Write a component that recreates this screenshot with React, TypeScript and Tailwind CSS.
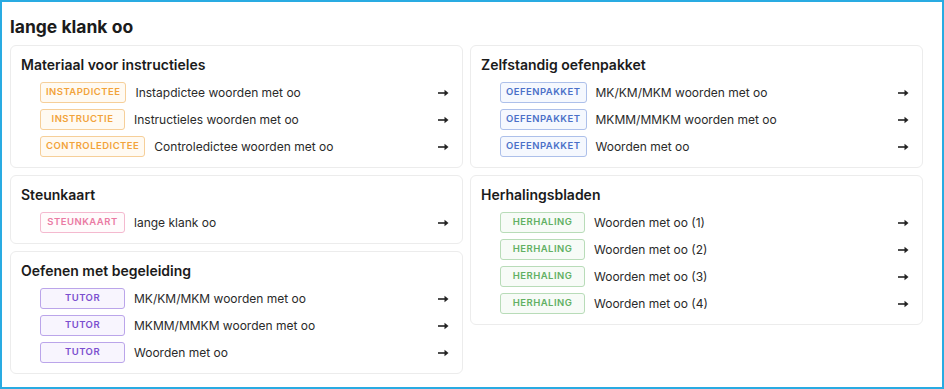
import React from "react";

type Kind = "orange" | "pink" | "purple" | "blue" | "green";

const badgeCls: Record<Kind, string> = {
  orange: "text-[#f2a33a] border-[#f6cf99] bg-[#fffaf2]",
  pink: "text-[#ea7aa3] border-[#f4b9cf] bg-[#fffbfc]",
  purple: "text-[#7b4fcf] border-[#bba5ea] bg-[#f8f5fe]",
  blue: "text-[#4b70c8] border-[#adc0ea] bg-[#f5f8fe]",
  green: "text-[#62b063] border-[#b8dcb8] bg-[#f7fbf7]",
};

type Row = { badge: string; kind: Kind; text: string };

function Arrow() {
  return (
    <svg width="11" height="8" viewBox="0 0 11 8" className="text-[#222]">
      <path d="M0 4 H8" stroke="currentColor" strokeWidth="1.6" />
      <path d="M6.5 0.8 L10.5 4 L6.5 7.2 Z" fill="currentColor" />
    </svg>
  );
}

function Card({ title, rows }: { title: string; rows: Row[] }) {
  return (
    <div className="rounded-md border border-[#ececec] bg-white pl-[10px] pr-[13px] pt-[9px] pb-[10px]">
      <div className="text-[14px] font-semibold leading-[20px] text-[#1b1b1b]">{title}</div>
      <div className="mt-[7px] flex flex-col gap-[6px] pl-[19px]">
        {rows.map((r, i) => (
          <div key={i} className="flex items-center">
            <span
              className={
                "inline-flex h-[21px] min-w-[85px] items-center justify-center rounded-[3px] border px-[5px] text-[9.5px] font-semibold uppercase tracking-[0.05em] " +
                badgeCls[r.kind]
              }
            >
              {r.badge}
            </span>
            <span className="ml-[9px] flex-1 text-[12px] text-[#2a2a2a]">{r.text}</span>
            <Arrow />
          </div>
        ))}
      </div>
    </div>
  );
}

export default function App() {
  return (
    <div
      className="h-[389px] w-[944px] border-2 border-[#29abe2] bg-white pl-[8px] pr-[19px]"
      style={{ fontFamily: "Inter, 'Open Sans', sans-serif" }}
    >
      <h1 className="mt-[14px] text-[17.5px] font-bold leading-[22px] text-[#1b1b1b]">lange klank oo</h1>
      <div className="mt-[7px] grid grid-cols-2 items-start gap-[7px]">
        <div className="flex flex-col gap-[7px]">
          <Card
            title="Materiaal voor instructieles"
            rows={[
              { badge: "Instapdictee", kind: "orange", text: "Instapdictee woorden met oo" },
              { badge: "Instructie", kind: "orange", text: "Instructieles woorden met oo" },
              { badge: "Controledictee", kind: "orange", text: "Controledictee woorden met oo" },
            ]}
          />
          <Card title="Steunkaart" rows={[{ badge: "Steunkaart", kind: "pink", text: "lange klank oo" }]} />
          <Card
            title="Oefenen met begeleiding"
            rows={[
              { badge: "Tutor", kind: "purple", text: "MK/KM/MKM woorden met oo" },
              { badge: "Tutor", kind: "purple", text: "MKMM/MMKM woorden met oo" },
              { badge: "Tutor", kind: "purple", text: "Woorden met oo" },
            ]}
          />
        </div>
        <div className="flex flex-col gap-[7px]">
          <Card
            title="Zelfstandig oefenpakket"
            rows={[
              { badge: "Oefenpakket", kind: "blue", text: "MK/KM/MKM woorden met oo" },
              { badge: "Oefenpakket", kind: "blue", text: "MKMM/MMKM woorden met oo" },
              { badge: "Oefenpakket", kind: "blue", text: "Woorden met oo" },
            ]}
          />
          <Card
            title="Herhalingsbladen"
            rows={[
              { badge: "Herhaling", kind: "green", text: "Woorden met oo (1)" },
              { badge: "Herhaling", kind: "green", text: "Woorden met oo (2)" },
              { badge: "Herhaling", kind: "green", text: "Woorden met oo (3)" },
              { badge: "Herhaling", kind: "green", text: "Woorden met oo (4)" },
            ]}
          />
        </div>
      </div>
    </div>
  );
}
